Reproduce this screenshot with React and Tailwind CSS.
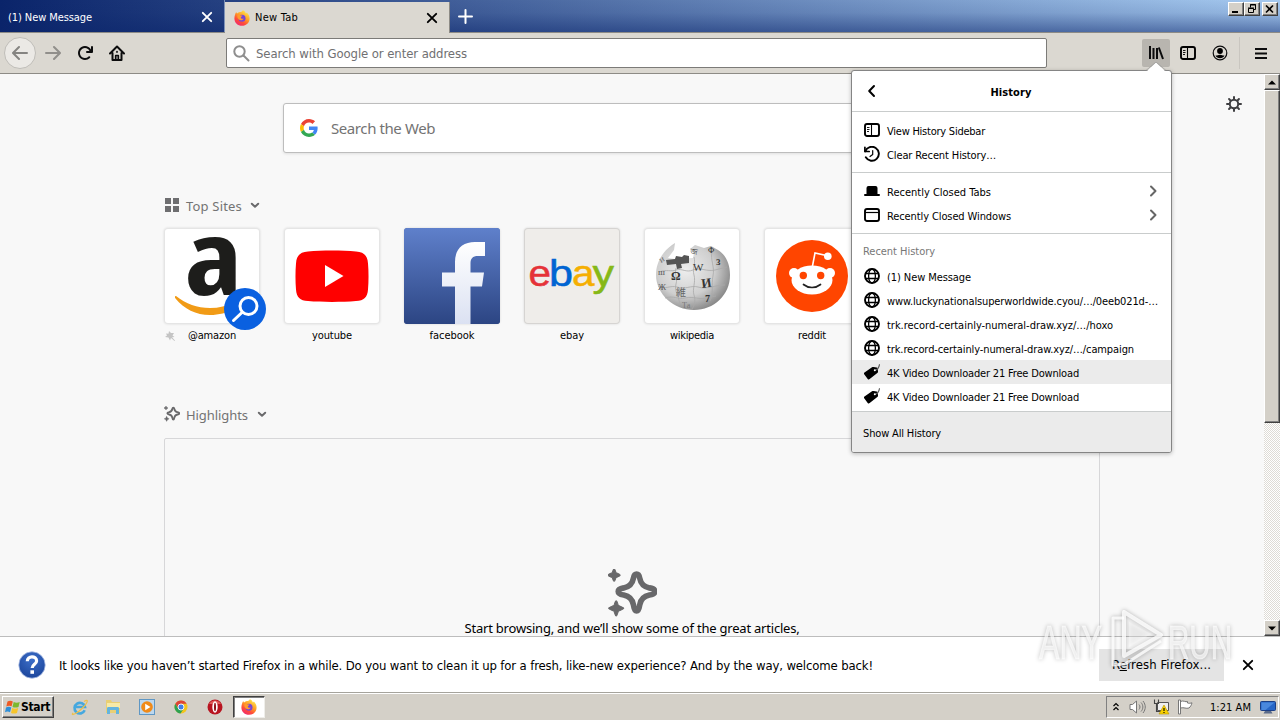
import React, { useLayoutEffect, useRef } from "react";

/* Text run that spreads its letters to take up exactly `w` pixels. */
function Fit({ w, className = "", children }) {
  const ref = useRef(null);
  useLayoutEffect(() => {
    const el = ref.current;
    el.style.letterSpacing = "0px";
    const n = el.textContent.length;
    el.style.letterSpacing = (w - el.getBoundingClientRect().width) / n + "px";
  }, [w]);
  return (
    <span ref={ref} className={"inline-block whitespace-pre " + className}>
      {children}
    </span>
  );
}

const Close = ({ className }) => (
  <svg className={className} width="12" height="12" viewBox="0 0 12 12" fill="none" stroke="currentColor" strokeWidth="1.9" strokeLinecap="round">
    <path d="M1.8 1.8l8.4 8.4M10.2 1.8L1.8 10.2" />
  </svg>
);

const FirefoxLogo = ({ size = 16 }) => (
  <svg width={size} height={size} viewBox="0 0 16 16">
    <defs>
      <linearGradient id="fx" x1="0.8" y1="0.1" x2="0.25" y2="1">
        <stop offset="0" stopColor="#ffe34a" />
        <stop offset="0.4" stopColor="#ff9a25" />
        <stop offset="0.7" stopColor="#ff4a3a" />
        <stop offset="1" stopColor="#ee2a74" />
      </linearGradient>
    </defs>
    <path d="M1.2 4.2c.2-1 .6-1.7 1.1-2.3.1.7.4 1.2.8 1.6C4.300 2.400 5.700 2 7 2c.8-.3 1.500-.9 1.900-1.700 1.600.7 2.600 1.900 3 3.100.5-.1.700-.5.800-.8 1.700 1.300 2.900 3.500 2.900 5.900 0 4.200-3.400 7.300-7.600 7.300S.4 12.600.4 8.400c0-1.600.3-3 .8-4.200z" fill="url(#fx)" />
    <circle cx="8" cy="8.300" r="3.500" fill="#7546d8" />
    <path d="M3.500 5c1.200-.6 2.600-.3 3.300.4l1.700.2c-.2 1-1.100 1.200-1.700 1.600.1 1.600 1.700 1.900 3 1.200-.7 2.200-4.600 2.500-5.800.2C3.200 7.200 3.200 6 3.500 5z" fill="#ff9b2c" />
  </svg>
);

const SidebarIcon = () => (
  <svg width="16" height="16" viewBox="0 0 16 16" fill="none" stroke="currentColor">
    <rect x="1" y="2" width="14" height="12" rx="2" strokeWidth="1.900" />
    <path d="M7.500 2.500v11" strokeWidth="1.100" />
    <path d="M3 5.500h2.500M3 7.500h2.500M3 9.500h2" strokeWidth=".9" />
  </svg>
);

const HistoryIcon = () => (
  <svg width="16" height="16" viewBox="0 0 16 16" fill="none" stroke="currentColor" strokeLinecap="round" strokeLinejoin="round">
    <path d="M1.300 5.300a7 7 0 1 1 .5 6" strokeWidth="1.900" />
    <path d="M.9 1.300v4.200h4.300" strokeWidth="1.700" />
    <path d="M8.700 4.500v4L6 10.500" strokeWidth="1.200" />
  </svg>
);

const TabIcon = () => (
  <svg width="16" height="16" viewBox="0 0 16 16" fill="currentColor">
    <path d="M2.500 11V5a2 2 0 0 1 2-2h7a2 2 0 0 1 2 2v6h1.500a1 1 0 0 1 0 2H1a1 1 0 0 1 0-2z" />
  </svg>
);

const WindowIcon = () => (
  <svg width="16" height="16" viewBox="0 0 16 16" fill="none" stroke="currentColor">
    <rect x="1" y="2" width="14" height="12" rx="2" strokeWidth="1.900" />
    <path d="M1.500 5.500h13" strokeWidth="1.200" />
  </svg>
);

const GlobeIcon = () => (
  <svg width="16" height="16" viewBox="0 0 16 16" fill="none" stroke="currentColor">
    <circle cx="8" cy="8" r="7" strokeWidth="1.900" />
    <ellipse cx="8" cy="8" rx="3.400" ry="7" strokeWidth="1.300" />
    <path d="M1.500 5.500h13M1.500 10.500h13" strokeWidth="1.300" />
  </svg>
);

const TagIcon = () => (
  <svg width="16" height="16" viewBox="0 0 16 16">
    <path d="M.5 8.500L8 3.300c.5-.3 1-.4 1.600-.3l3 .5c.7.100 1 .5 1.100 1.200l.3 2.800c.1.700-.1 1.200-.7 1.600l-7.600 6c-.8.6-1.500.5-2-.2L.2 10.300C-.3 9.600-.2 9 .5 8.500z" fill="#000" />
    <path d="M11 6c2.800-.2 4-2.300 4.500-5.700" fill="none" stroke="#555" strokeWidth="1.100" />
    <circle cx="10.800" cy="6.200" r="1" fill="#fff" />
  </svg>
);

const Chevron = () => (
  <svg width="10" height="12" viewBox="0 0 10 12" fill="none" stroke="#666" strokeWidth="2" strokeLinecap="round" strokeLinejoin="round">
    <path d="M3 1.500L7.500 6 3 10.500" />
  </svg>
);

const ChevronDown = () => (
  <svg width="10" height="7" viewBox="0 0 10 7" fill="none" stroke="#6a6a6c" strokeWidth="2" strokeLinecap="round" strokeLinejoin="round">
    <path d="M1.800 1.700L5 4.700l3.200-3" />
  </svg>
);

const Sparkle = ({ size }) => (
  <svg width={size} height={size} viewBox="0 0 48 48">
    <path d="M28 5c2 0 2.600 1.500 3.100 4 1 5.500 3.500 8.300 9.500 9.500 3.500.6 5.400 1.300 5.400 3.500s-1.900 2.900-5.400 3.500c-6 1.200-8.500 4-9.500 9.500-.5 3.500-1.100 6-3.100 6s-2.600-2.500-3.100-6c-1-5.500-3.500-8.300-9.500-9.500-3.500-.6-5.400-1.300-5.400-3.500s1.900-2.900 5.400-3.500c6-1.200 8.500-4 9.500-9.500.5-2.500 1.100-4 3.100-4z" fill="none" stroke="#68686a" strokeWidth="5.500" strokeLinejoin="round" />
    <path d="M6 0c1 0 1.300 2.500 1.900 3.600C9 4.200 12 5 12 6s-3 1.800-4.100 2.400C7.300 9.500 7 12 6 12s-1.300-2.500-1.900-3.600C3 7.800 0 7 0 6s3-1.800 4.100-2.400C4.700 2.500 5 0 6 0z" fill="#68686a" stroke="#68686a" />
    <path d="M8 31c1.100 0 1.500 3.200 2.200 4.800C12 36.700 15.500 37.500 15.500 38.500s-3.500 1.800-5.300 2.700C9.500 43 9.100 46 8 46s-1.500-3-2.200-4.800C4 40.300.5 39.500.5 38.500s3.500-1.800 5.300-2.700C6.500 34.200 6.900 31 8 31z" fill="#68686a" stroke="#68686a" />
  </svg>
);

function MenuItem({ icon, label, w, arrow, active }) {
  return (
    <div className={"flex h-6 items-center pr-[13px] pl-3 " + (active ? "bg-[#ebebeb]" : "")}>
      <span className="w-4 shrink-0">{icon}</span>
      <Fit w={w} className="mt-[3px] ml-[7px] leading-5">{label}</Fit>
      {arrow && <span className="ml-auto"><Chevron /></span>}
    </div>
  );
}

function HistoryPanel() {
  return (
    <div className="absolute top-[70px] left-[851px] flex h-[383px] w-[321px] flex-col rounded-[3px] border border-[#858585] bg-white text-[11px] text-black shadow-[0_1px_4px_rgba(0,0,0,0.25)]">
      <svg className="absolute -top-[9px] left-[293px]" width="22" height="10" viewBox="0 0 22 10">
        <path d="M0 9.500h1.500L11 .5l9.500 9H22V10H0z" fill="#fff" />
        <path d="M1 8.500L11 0l10 8.500" fill="none" stroke="#999" strokeWidth=".7" />
      </svg>
      <div className="relative flex h-[41px] items-center justify-center border-b border-[#c9cccc]">
        <svg className="absolute top-[13px] left-[14px]" width="10" height="14" viewBox="0 0 10 14" fill="none" stroke="#000" strokeWidth="2" strokeLinecap="round" strokeLinejoin="round">
          <path d="M8 2L3.200 7 8 12" />
        </svg>
        <Fit w={41} className="mt-[3px] mr-px font-bold">History</Fit>
      </div>
      <div className="border-b border-[#c9cccc] py-1.5">
        <MenuItem icon={<SidebarIcon />} label="View History Sidebar" w={98} />
        <MenuItem icon={<HistoryIcon />} label="Clear Recent History…" w={109} />
      </div>
      <div className="border-b border-[#c9cccc] py-1.5">
        <MenuItem icon={<TabIcon />} label="Recently Closed Tabs" w={104} arrow />
        <MenuItem icon={<WindowIcon />} label="Recently Closed Windows" w={124} arrow />
      </div>
      <div className="flex h-[178px] flex-col border-b border-[#c9cccc]">
        <div className="flex h-[30px] items-center pt-[5px] pl-[11px] text-[#777]">
          <Fit w={72}>Recent History</Fit>
        </div>
        <MenuItem icon={<GlobeIcon />} label="(1) New Message" w={84} />
        <MenuItem icon={<GlobeIcon />} label="www.luckynationalsuperworldwide.cyou/…/0eeb021d-…" w={271} />
        <MenuItem icon={<GlobeIcon />} label="trk.record-certainly-numeral-draw.xyz/…/hoxo" w={226} />
        <MenuItem icon={<GlobeIcon />} label="trk.record-certainly-numeral-draw.xyz/…/campaign" w={247} />
        <MenuItem icon={<TagIcon />} label="4K Video Downloader 21 Free Download" w={192} active />
        <MenuItem icon={<TagIcon />} label="4K Video Downloader 21 Free Download" w={192} />
      </div>
      <div className="flex flex-1 items-center rounded-b-[2px] bg-[#ebebeb] pt-[3px] pl-[11px]">
        <Fit w={78}>Show All History</Fit>
      </div>
    </div>
  );
}

const AmazonLogo = () => (
  <svg width="96" height="96" viewBox="0 0 96 96">
    <text x="20.500" y="66.500" fontFamily="Open Sans, sans-serif" fontWeight="700" fontSize="103" textLength="58" lengthAdjust="spacingAndGlyphs" fill="#1d1d1b">a</text>
    <path d="M12 68c10 8 21 12 34 12 9 0 17-2 24-6v6c-7 5-15 7-24 7-14 0-26-6-34.500-16.500-1-1.500-.5-3 .5-2.500z" fill="#f19b16" />
  </svg>
);

const YoutubeLogo = () => (
  <svg width="96" height="96" viewBox="0 0 96 96">
    <path d="M24 23.500c14-1.300 34-1.300 48 0 8 .6 11.500 4 12 12 .7 8 .7 18 0 26-.5 8-4 11-12 11.600-14 1.200-34 1.200-48 0-8-.6-11.500-3.600-12-11.600-.7-8-.7-18 0-26 .5-8 4-11.400 12-12z" fill="#f00" />
    <path d="M41 37l18.500 11L41 59z" fill="#fff" />
  </svg>
);

const FacebookLogo = () => (
  <svg width="96" height="96" viewBox="0 0 96 96">
    <defs>
      <linearGradient id="fbb" x1="0" y1="0" x2="0" y2="1">
        <stop offset="0" stopColor="#5f80cb" />
        <stop offset="1" stopColor="#2c4583" />
      </linearGradient>
      <linearGradient id="fbf" x1="0" y1="0" x2="0" y2="1">
        <stop offset="0" stopColor="#fff" />
        <stop offset="1" stopColor="#dbe1f2" />
      </linearGradient>
    </defs>
    <rect width="96" height="96" rx="3" fill="url(#fbb)" />
    <path d="M51 96V58.500H38V44.500h13V34c0-13 7.500-20 20-20h10v14h-7c-5.500 0-7.500 2.500-7.500 7.500v9H80l-2 14H66.500V96z" fill="url(#fbf)" />
  </svg>
);

const EbayLogo = () => (
  <svg width="96" height="96" viewBox="0 0 96 96" fontFamily="Liberation Sans, Arial, sans-serif" fontSize="36" strokeWidth=".5">
    <text x="4.500" y="58" fill="#e53238" stroke="#e53238" textLength="22.500" lengthAdjust="spacingAndGlyphs">e</text>
    <text x="25" y="58" fill="#0064d2" stroke="#0064d2" textLength="24" lengthAdjust="spacingAndGlyphs">b</text>
    <text x="48" y="58" fill="#f5af02" stroke="#f5af02" textLength="22.500" lengthAdjust="spacingAndGlyphs">a</text>
    <text x="68.500" y="58" fill="#86b817" stroke="#86b817" textLength="21.500" lengthAdjust="spacingAndGlyphs">y</text>
  </svg>
);

const WikipediaLogo = () => (
  <svg width="96" height="96" viewBox="0 0 96 96" fontFamily="Liberation Serif, serif" fill="#333">
    <defs>
      <radialGradient id="wk" cx="0.4" cy="0.4" r="0.65">
        <stop offset="0" stopColor="#eee" />
        <stop offset="0.6" stopColor="#cfcfcf" />
        <stop offset="1" stopColor="#858585" />
      </radialGradient>
    </defs>
    <path d="M28 17l3-2-1 7-6 8 7 1 18-1 1-5-4-4 5-4 9 3 7-2 7 4c8 5 12 14 12 25 0 20-16 35-36 35S12 66 12 47c0-12 6-23 16-30z" fill="url(#wk)" />
    <path d="M22 32l9-1 1-3 6 1 2-2 5 1v7l-8 1 1 4-5 1-1-5-9 1z" fill="#555" />
    <g fill="none" stroke="#aaa" strokeWidth=".8">
      <path d="M15 44c8-3 12 0 17-2 6-2 10 3 17 0 9-3 13 2 22 0l12-3M14 58c8 4 12-1 19 1 8 3 14-2 21 0 10 3 16-2 27-2M21 70c9-3 13 2 20 0 9-2 14 2 21 0l10-2" />
      <path d="M32 40c-2 7 2 9 0 16s3 12 4 21M50 29c2 7-2 11 0 18s-2 14 0 20 0 11-2 14M68 24c-2 7 3 15 1 24s1 16-3 25" />
    </g>
    <text x="27" y="52" fontSize="12" fontWeight="700">Ω</text>
    <text x="49" y="43" fontSize="11">W</text>
    <text x="58" y="60" fontSize="13" fontWeight="700" transform="rotate(-8 58 60)">И</text>
    <text x="32" y="68" fontSize="10" fontFamily="Noto Sans CJK JP, sans-serif" fill="#666">維</text>
    <text x="61" y="74" fontSize="10" fontWeight="700">7</text>
    <text x="72" y="37" fontSize="9" fontWeight="700">3</text>
    <text x="64" y="25" fontSize="8">Ф</text>
    <text x="46" y="26" fontSize="8" transform="rotate(8 46 26)">জ</text>
    <text x="14" y="47" fontSize="9" fill="#555">ш</text>
    <text x="14" y="62" fontSize="9" fill="#555">Ж</text>
    <text x="17" y="35" fontSize="9" fill="#666" transform="rotate(-30 17 35)">и</text>
    <text x="38" y="80" fontSize="8" fill="#777">Та</text>
  </svg>
);

const RedditLogo = () => (
  <svg width="96" height="96" viewBox="0 0 96 96">
    <circle cx="48" cy="48" r="36" fill="#ff4500" />
    <path d="M48.300 39l2.700-14 12.500 2.800" fill="none" stroke="#fff" strokeWidth="1.600" />
    <circle cx="63.800" cy="28.300" r="3.800" fill="#fff" />
    <circle cx="30" cy="45" r="5" fill="#fff" />
    <circle cx="66" cy="45" r="5" fill="#fff" />
    <ellipse cx="48" cy="52" rx="20.500" ry="14.500" fill="#fff" />
    <circle cx="39.300" cy="47.500" r="3.700" fill="#ff4500" />
    <circle cx="56.700" cy="47.500" r="3.700" fill="#ff4500" />
    <path d="M39.500 56.500c5 4 12 4 17 0" fill="none" stroke="#222" strokeWidth="1.700" strokeLinecap="round" />
  </svg>
);

const SITES = [
  { name: "@amazon", w: 48, logo: <AmazonLogo />, bg: "bg-white", pinned: true },
  { name: "youtube", w: 40, logo: <YoutubeLogo />, bg: "bg-white" },
  { name: "facebook", w: 45, logo: <FacebookLogo />, bg: "bg-[#3b5998]" },
  { name: "ebay", w: 24, logo: <EbayLogo />, bg: "bg-[#efedea]" },
  { name: "wikipedia", w: 44, logo: <WikipediaLogo />, bg: "bg-white" },
  { name: "reddit", w: 28, logo: <RedditLogo />, bg: "bg-white" },
];

function TopSite({ site }) {
  return (
    <div className="relative w-24">
      <div className={"h-24 w-24 rounded-[4px] shadow-[inset_0_0_0_1px_rgba(0,0,0,0.1),0_0_2px_1px_rgba(0,0,0,0.06)] " + site.bg}>
        {site.logo}
      </div>
      <div className="flex h-5 items-center justify-center pt-[3px] text-[11px] text-black">
        <Fit w={site.w}>{site.name}</Fit>
      </div>
      {site.pinned && (
        <>
          <svg className="absolute top-[60px] left-[60px]" width="42" height="42" viewBox="0 0 42 42">
            <circle cx="21" cy="21" r="21" fill="#0a60e0" />
            <g fill="none" stroke="#fff" strokeWidth="3" strokeLinecap="round">
              <circle cx="24.500" cy="18" r="8.500" />
              <path d="M18 24.500l-8.500 8" />
            </g>
          </svg>
          <svg className="absolute top-[103px] left-[1px]" width="10" height="10" viewBox="0 0 10 10" fill="#c4c4c4">
            <path d="M4 0l2 2L9 2 7.500 4.500l2 1.500-2.500.3L10 9.500 9.500 10 6 7 5 9.500 3.500 6.500 0 6l2-1.500L1 2.500l2.500.3z" />
          </svg>
        </>
      )}
    </div>
  );
}

const BTN = "bg-[#d4d0c8] border border-t-white border-l-white border-r-[#404040] border-b-[#404040] shadow-[inset_-1px_-1px_0_#808080]";

function TabStrip() {
  return (
    <div className="flex h-[33px] shrink-0 border-b border-[#8d8b86] bg-[linear-gradient(to_bottom,rgba(10,36,106,0)_0%,rgba(10,36,106,0.1)_40%,rgba(10,36,106,0.5)_100%),linear-gradient(to_right,#0a246a,#a6caf0)] text-[11px]">
      <div className="flex w-[225px] items-center border-r border-[#7f93b8] pt-px pr-[11px] pl-2 text-white">
        <Fit w={84} className="mt-0.5">(1) New Message</Fit>
        <Close className="ml-auto" />
      </div>
      <div className="mt-[2px] -mb-px flex w-[225px] items-center border-r border-[#8d8b86] bg-[#dbd8d1] pr-[11px] pl-[9px] text-black">
        <FirefoxLogo />
        <Fit w={43} className="ml-[5px]">New Tab</Fit>
        <Close className="ml-auto" />
      </div>
      <svg className="mt-[9px] ml-2" width="15" height="15" viewBox="0 0 15 15" stroke="#fff" strokeWidth="2" strokeLinecap="round">
        <path d="M7.500 1v13M1 7.500h13" />
      </svg>
      <div className="mt-[2px] mr-[2px] ml-auto flex">
        <div className={"flex h-[14px] w-4 items-center justify-center " + BTN}>
          <svg width="10" height="9"><path d="M1 7h6" stroke="#000" strokeWidth="2" /></svg>
        </div>
        <div className={"flex h-[14px] w-4 items-center justify-center " + BTN}>
          <svg width="10" height="10" fill="none" stroke="#000"><path d="M3.500 3.500v-3h5v5h-2M3 1h6M1.500 4.500h5v4h-5zM1 4h6" /></svg>
        </div>
        <div className={"ml-[2px] flex h-[14px] w-4 items-center justify-center " + BTN}>
          <svg width="10" height="9" stroke="#000" strokeWidth="1.600"><path d="M1 .5l7 7M8 .5l-7 7" /></svg>
        </div>
      </div>
    </div>
  );
}

function NavBar() {
  return (
    <div className="flex h-[41px] shrink-0 items-center border-b border-[#8d8b86] bg-[#dbd8d1]">
      <div className="ml-1 flex h-8 w-8 items-center justify-center rounded-full border border-[#bfbdb8] bg-[#ebe9e5]">
        <svg width="16" height="16" viewBox="0 0 16 16" fill="none" stroke="#858481" strokeWidth="2" strokeLinecap="round" strokeLinejoin="round">
          <path d="M15 8H1.500M7 2L1 8l6 6" />
        </svg>
      </div>
      <svg className="ml-[9px]" width="16" height="16" viewBox="0 0 16 16" fill="none" stroke="#918f8b" strokeWidth="2" strokeLinecap="round" strokeLinejoin="round">
        <path d="M1 8h13.500M9 2l6 6-6 6" />
      </svg>
      <svg className="ml-4" width="16" height="16" viewBox="0 0 16 16" fill="#0c0c0d">
        <path d="M15 1a1 1 0 0 0-1 1v2.418A6.995 6.995 0 1 0 8 15a6.954 6.954 0 0 0 4.950-2.050 1 1 0 0 0-1.414-1.414A5.019 5.019 0 1 1 12.549 6H10a1 1 0 0 0 0 2h5a1 1 0 0 0 1-1V2a1 1 0 0 0-1-1z" />
      </svg>
      <svg className="ml-4" width="16" height="16" viewBox="0 0 16 16" fill="none" stroke="#0c0c0d" strokeWidth="2" strokeLinecap="round" strokeLinejoin="round">
        <path d="M1 8.500l7-7 7 7M3.500 8v7h9V8" />
        <path d="M6.700 14v-3.500h2.600V14M8 6.500v.6" strokeWidth="1.700" />
      </svg>
      <div className="ml-[101px] flex h-[30px] w-[821px] items-center rounded-[2px] border border-[#7c7b78] bg-white pl-1.5 text-[13px] text-[#707072]">
        <svg width="17" height="17" viewBox="0 0 17 17" fill="none" stroke="#8e8e8e" strokeWidth="2" strokeLinecap="round">
          <circle cx="6.500" cy="6.500" r="5.200" />
          <path d="M10.500 10.500l5 5" />
        </svg>
        <Fit w={211} className="mt-0.5 ml-1.5">Search with Google or enter address</Fit>
      </div>
      <div className="ml-[95px] flex h-7 w-7 items-center justify-center rounded-[2px] bg-[#b8b5af]">
        <svg width="16" height="16" viewBox="0 0 16 16" fill="none" stroke="#0c0c0d" strokeWidth="2">
          <path d="M2 1v13M5.500 3v11M9 3v11M10.800 2.500L15 14" />
        </svg>
      </div>
      <div className="ml-[10px]"><SidebarIcon /></div>
      <svg className="ml-4" width="16" height="16" viewBox="0 0 16 16">
        <circle cx="8" cy="8" r="6.800" fill="none" stroke="#0c0c0d" strokeWidth="1.200" />
        <circle cx="8" cy="6" r="2.900" />
        <path d="M3.500 10.500c2 .2 2.300-.8 4.500-.8s2.500 1 4.500.8C11.700 12.200 10 13.200 8 13.200s-3.700-1-4.500-2.700z" />
      </svg>
      <div className="ml-[11px] h-8 w-px bg-[#c9c6c0]" />
      <svg className="ml-[14px]" width="14" height="14" viewBox="0 0 14 14" stroke="#0c0c0d" strokeWidth="2">
        <path d="M1 3h12M1 7.500h12M1 12h12" />
      </svg>
    </div>
  );
}

function ScrollBar() {
  return (
    <div className="flex w-4 shrink-0 flex-col bg-[conic-gradient(#fff_25%,#dedbd5_0_50%,#fff_0_75%,#dedbd5_0)] bg-[length:2px_2px]">
      <div className={"flex h-4 items-center justify-center " + BTN}>
        <svg width="8" height="5"><path d="M0 4.500h8L4 .5z" /></svg>
      </div>
      <div className={"h-[333px] " + BTN} />
      <div className={"mt-auto flex h-4 items-center justify-center " + BTN}>
        <svg width="8" height="5"><path d="M0 .5h8l-4 4z" /></svg>
      </div>
    </div>
  );
}

function NewTabPage() {
  return (
    <div className="flex h-[562px] shrink-0 overflow-hidden bg-[#f8f8f8]">
      <div className="flex flex-1 flex-col px-[164px]">
        <div className="mt-[29px] ml-[119px] flex h-[50px] w-[698px] shrink-0 items-center rounded-[3px] border border-[#bdbdbd] bg-white pl-[16px] shadow-[0_1px_3px_rgba(0,0,0,0.1)]">
          <svg width="18" height="18" viewBox="0 0 48 48">
            <path fill="#EA4335" d="M24 9.500c3.540 0 6.710 1.220 9.210 3.600l6.850-6.850C35.900 2.380 30.470 0 24 0 14.620 0 6.510 5.380 2.560 13.220l7.980 6.190C12.430 13.720 17.740 9.500 24 9.500z" />
            <path fill="#4285F4" d="M46.980 24.550c0-1.570-.15-3.090-.38-4.550H24v9.020h12.940c-.58 2.960-2.260 5.480-4.780 7.180l7.730 6c4.510-4.180 7.090-10.360 7.090-17.650z" />
            <path fill="#FBBC05" d="M10.530 28.590c-.48-1.450-.76-2.990-.76-4.590s.27-3.140.76-4.590l-7.980-6.190C.92 16.460 0 20.120 0 24c0 3.880.92 7.540 2.560 10.780l7.970-6.190z" />
            <path fill="#34A853" d="M24 48c6.480 0 11.930-2.130 15.890-5.810l-7.730-6c-2.150 1.450-4.920 2.300-8.160 2.300-6.260 0-11.570-4.220-13.470-9.910l-7.980 6.190C6.510 42.620 14.620 48 24 48z" />
          </svg>
          <Fit w={104} className="ml-[13px] font-['Noto_Sans',sans-serif] text-[15px] text-[#737373]">Search the Web</Fit>
        </div>
        <div className="mt-[42px] flex h-5 shrink-0 items-center text-[#737373]">
          <svg width="16" height="14" viewBox="0 0 16 14" fill="#6e6e70"><path d="M1 0h6v6H1zM9 0h6v6H9zM1 8h6v6H1zM9 8h6v6H9z" /></svg>
          <Fit w={56} className="mt-0.5 ml-[6px] font-['Noto_Sans',sans-serif] text-[13px]">Top Sites</Fit>
          <span className="ml-2 flex"><ChevronDown /></span>
        </div>
        <div className="mt-[13px] flex shrink-0 gap-6">
          {SITES.map((s) => <TopSite key={s.name} site={s} />)}
        </div>
        <div className="mt-[60px] flex h-5 shrink-0 items-center text-[#737373]">
          <Sparkle size={16} />
          <Fit w={62} className="mt-0.5 ml-[6px] font-['Noto_Sans',sans-serif] text-[13px]">Highlights</Fit>
          <span className="ml-[9px] flex"><ChevronDown /></span>
        </div>
        <div className="mt-[14px] flex h-[300px] w-[936px] shrink-0 flex-col items-center rounded-[2px] border border-[#d7d7d9] pt-[130px]">
          <Sparkle size={49} />
          <Fit w={335} className="font-['Noto_Sans',sans-serif] text-[13px] leading-5 text-black">Start browsing, and we’ll show some of the great articles,</Fit>
        </div>
      </div>
      <svg className="absolute top-[96px] left-[1226px]" width="16" height="16" viewBox="0 0 16 16" fill="none" stroke="#3f3f42" strokeWidth="2" strokeLinecap="round">
        <circle cx="8" cy="8" r="4.200" />
        <path d="M8 1v2M8 13v2M1 8h2M13 8h2M3.050 3.050l1.400 1.400M11.550 11.550l1.400 1.400M12.950 3.050l-1.400 1.400M4.450 11.550l-1.400 1.400" />
      </svg>
      <ScrollBar />
    </div>
  );
}

function Notification() {
  return (
    <div className="flex h-14 shrink-0 items-center border-t border-[#bdbdbd] bg-white pr-[26px] pl-[18px] text-[13px] text-black">
      <svg width="28" height="28" viewBox="0 0 28 28">
        <defs>
          <radialGradient id="hp" cx=".5" cy=".3" r=".7">
            <stop offset="0" stopColor="#3d6fc9" />
            <stop offset="1" stopColor="#1c469c" />
          </radialGradient>
        </defs>
        <circle cx="14" cy="14" r="13.200" fill="url(#hp)" stroke="#a9bde4" strokeWidth=".8" />
        <path d="M9.300 10.300c0-6 9.300-5.800 9.300-.4 0 3.300-4.400 3.300-4.400 7" fill="none" stroke="#fff" strokeWidth="3.200" />
        <rect x="12.400" y="19.300" width="3.600" height="3.500" fill="#fff" />
      </svg>
      <Fit w={814} className="mt-0.5 ml-[13px]">It looks like you haven’t started Firefox in a while. Do you want to clean it up for a fresh, like-new experience? And by the way, welcome back!</Fit>
      <div className="ml-auto flex h-8 w-[125px] items-center justify-center bg-[#e4e4e4]">
        <Fit w={99}>R<span className="underline">e</span>fresh Firefox...</Fit>
      </div>
      <Close className="ml-[18px]" />
    </div>
  );
}

function TaskBar() {
  return (
    <div className="flex h-7 shrink-0 items-center border-t border-[#a5a39c] bg-[#d4d0c8] pt-px text-[11px] text-black shadow-[inset_0_1px_0_#fff]">
      <div className={"ml-[2px] flex h-[22px] w-[52px] items-center pl-[2px] " + BTN}>
        <svg width="16" height="16" viewBox="0 0 16 16">
          <path d="M2.500 2.500c2-1.200 4-.9 5.300 0L6.600 7.300C5 6.500 3.300 6.400 1.300 7.500z" fill="#ee5a24" />
          <path d="M8.700 3c1.800.9 4 .9 6 0l-1.200 4.900c-2 1-4.200.9-6 0z" fill="#7cb82f" />
          <path d="M1 8.500c2-1 3.800-.9 5.300 0L5 13.300c-1.500-1-3.300-1-5 0z" fill="#2d8fd8" />
          <path d="M7.200 9c1.800.9 4 .9 6 0L12 13.900c-2 1-4.200.9-6 0z" fill="#f7c52b" />
        </svg>
        <Fit w={29} className="text-[12px] font-bold">Start</Fit>
      </div>
      <svg className="ml-[17px]" width="18" height="18" viewBox="0 0 18 18" fill="none">
        <path d="M13.700 12.300A5.300 5.300 0 1 1 14 9H5" stroke="#45a8df" strokeWidth="2.600" />
        <path d="M2 14.800C-1 19 7 15 12 9.500S18 .5 13 3.500" stroke="#edc04a" strokeWidth="1.200" />
      </svg>
      <svg className="ml-[15px]" width="18" height="16" viewBox="0 0 18 16">
        <path d="M2 1h5l1 2h8v11H2z" fill="#e9cf74" />
        <path d="M3 4h13v5H3z" fill="#f7eaa7" />
        <path d="M3 15V9.500c0-1 .5-1.500 1.500-1.500h9c1 0 1.500.5 1.500 1.500V15h-3v-4H6v4z" fill="#64b4de" />
      </svg>
      <svg className="ml-[17px]" width="17" height="17" viewBox="0 0 17 17">
        <rect x=".5" y=".5" width="15" height="15" fill="#bcd7ee" stroke="#5f97c4" />
        <circle cx="8" cy="8" r="5.800" fill="#f08a18" />
        <path d="M6.200 4.800L11.500 8l-5.300 3.200z" fill="#fff" />
      </svg>
      <svg className="ml-[18px]" width="14" height="14" viewBox="0 0 14 14">
        <circle cx="7" cy="7" r="6.500" fill="#f3c51d" />
        <path d="M1.300 3.800A6.500 6.500 0 0 1 12.700 3.800H7L4.200 8.600z" fill="#dd4437" />
        <path d="M1.300 3.800A6.500 6.500 0 0 0 6.500 13.500L9.800 8.600H4.200z" fill="#2ea152" />
        <circle cx="7" cy="7" r="3" fill="#3f7fe8" stroke="#fff" strokeWidth=".9" />
      </svg>
      <svg className="ml-[19px]" width="16" height="16" viewBox="0 0 16 16">
        <circle cx="8" cy="8" r="7.500" fill="#b81420" />
        <path d="M2 5a7 7 0 0 1 12 0z" fill="#e05a5a" />
        <ellipse cx="8" cy="8" rx="2.700" ry="5.700" fill="#fff" />
        <ellipse cx="8" cy="8" rx="1" ry="4.300" fill="#8b0d16" />
      </svg>
      <div className="ml-[10px] flex h-[22px] w-8 items-center justify-center border border-t-[#404040] border-l-[#404040] border-r-[#efeeea] border-b-[#efeeea] bg-white shadow-[inset_1px_1px_0_#808080]">
        <FirefoxLogo />
      </div>
      <div className="mr-px ml-auto flex h-[22px] w-[173px] items-center border border-t-[#808080] border-l-[#808080] border-r-white border-b-white pl-[5px]">
        <svg width="8" height="10" viewBox="0 0 8 10" fill="none" stroke="#000" strokeWidth="1.200"><path d="M1.500 4L4 1.500 6.500 4M1.500 8L4 5.500 6.500 8" /></svg>
        <svg className="ml-[9px]" width="17" height="16" viewBox="0 0 17 16" fill="none" stroke="#777">
          <path d="M1 5.500h2.500L7.500 2v12l-4-3.500H1z" fill="#fff" />
          <path d="M10 5.500c1.300 1.500 1.300 3.500 0 5M12 3.500c2.500 2.800 2.500 6.200 0 9M14 2c3 4 3 8 0 12" />
        </svg>
        <svg className="ml-[7px]" width="17" height="16" viewBox="0 0 17 16">
          <path d="M4.500 3.500h11v8h-11z" fill="#eee" stroke="#555" />
          <path d="M1.500.5v4h4v-4M3.500 4.500v8h5" fill="none" stroke="#444" strokeWidth="1.100" />
          <path d="M11 6l5 9H6z" fill="#f8d000" stroke="#b69400" strokeWidth=".6" />
          <path d="M11 9v3M11 13v1" stroke="#000" strokeWidth="1.100" />
        </svg>
        <svg className="ml-[7px]" width="17" height="16" viewBox="0 0 17 16" fill="#fff" stroke="#777">
          <path d="M3.500 2.500c3-1.500 5 1 7 0v1.500c1.500.5 3 .3 4.500-.2-.5 2-1.500 4-3 5.200-3 1-5-1-8.500 0z" />
          <path d="M1.500 1v14h2V1z" />
        </svg>
        <Fit w={41} className="mt-0.5 ml-4">1:21 AM</Fit>
        <svg className="ml-[9px]" width="16" height="14" viewBox="0 0 16 14">
          <rect x=".5" y="1.500" width="15" height="9" rx="1" fill="#2766c6" stroke="#1c3f85" />
          <path d="M1.500 2.500h13l-9 7.500h-4z" fill="#4a88dd" />
          <path d="M5 11h6l1.500 2.500h-9z" fill="#5a6b8a" />
        </svg>
      </div>
    </div>
  );
}

function Watermark() {
  return (
    <svg className="pointer-events-none absolute top-[600px] left-[1030px] drop-shadow-[0_0_2px_rgba(0,0,0,0.35)]" width="210" height="80" viewBox="0 0 210 80" fontFamily="Liberation Sans, Arial, sans-serif" fontSize="49" fill="#fff" fillOpacity="0.65">
      <text x="9" y="59" textLength="63" lengthAdjust="spacingAndGlyphs" stroke="#fff" strokeOpacity=".5">ANY</text>
      <text x="138" y="59" textLength="64" lengthAdjust="spacingAndGlyphs" stroke="#fff" strokeOpacity=".5">RUN</text>
      <g fill="none" stroke="#fff" strokeOpacity="0.8" strokeWidth="4" strokeLinejoin="round">
        <path d="M94 12v44l37-21z" />
        <path d="M94 18h-11v47l12-1 36-23" strokeWidth="3" />
      </g>
      <path d="M99 22v25l22-13z" fillOpacity="0.3" />
    </svg>
  );
}

export default function App() {
  return (
    <div className="relative flex h-[720px] w-[1280px] flex-col overflow-hidden bg-white font-['DejaVu_Sans_Condensed','DejaVu_Sans',sans-serif] leading-4 font-stretch-condensed">
      <TabStrip />
      <NavBar />
      <NewTabPage />
      <Notification />
      <TaskBar />
      <HistoryPanel />
      <Watermark />
    </div>
  );
}
